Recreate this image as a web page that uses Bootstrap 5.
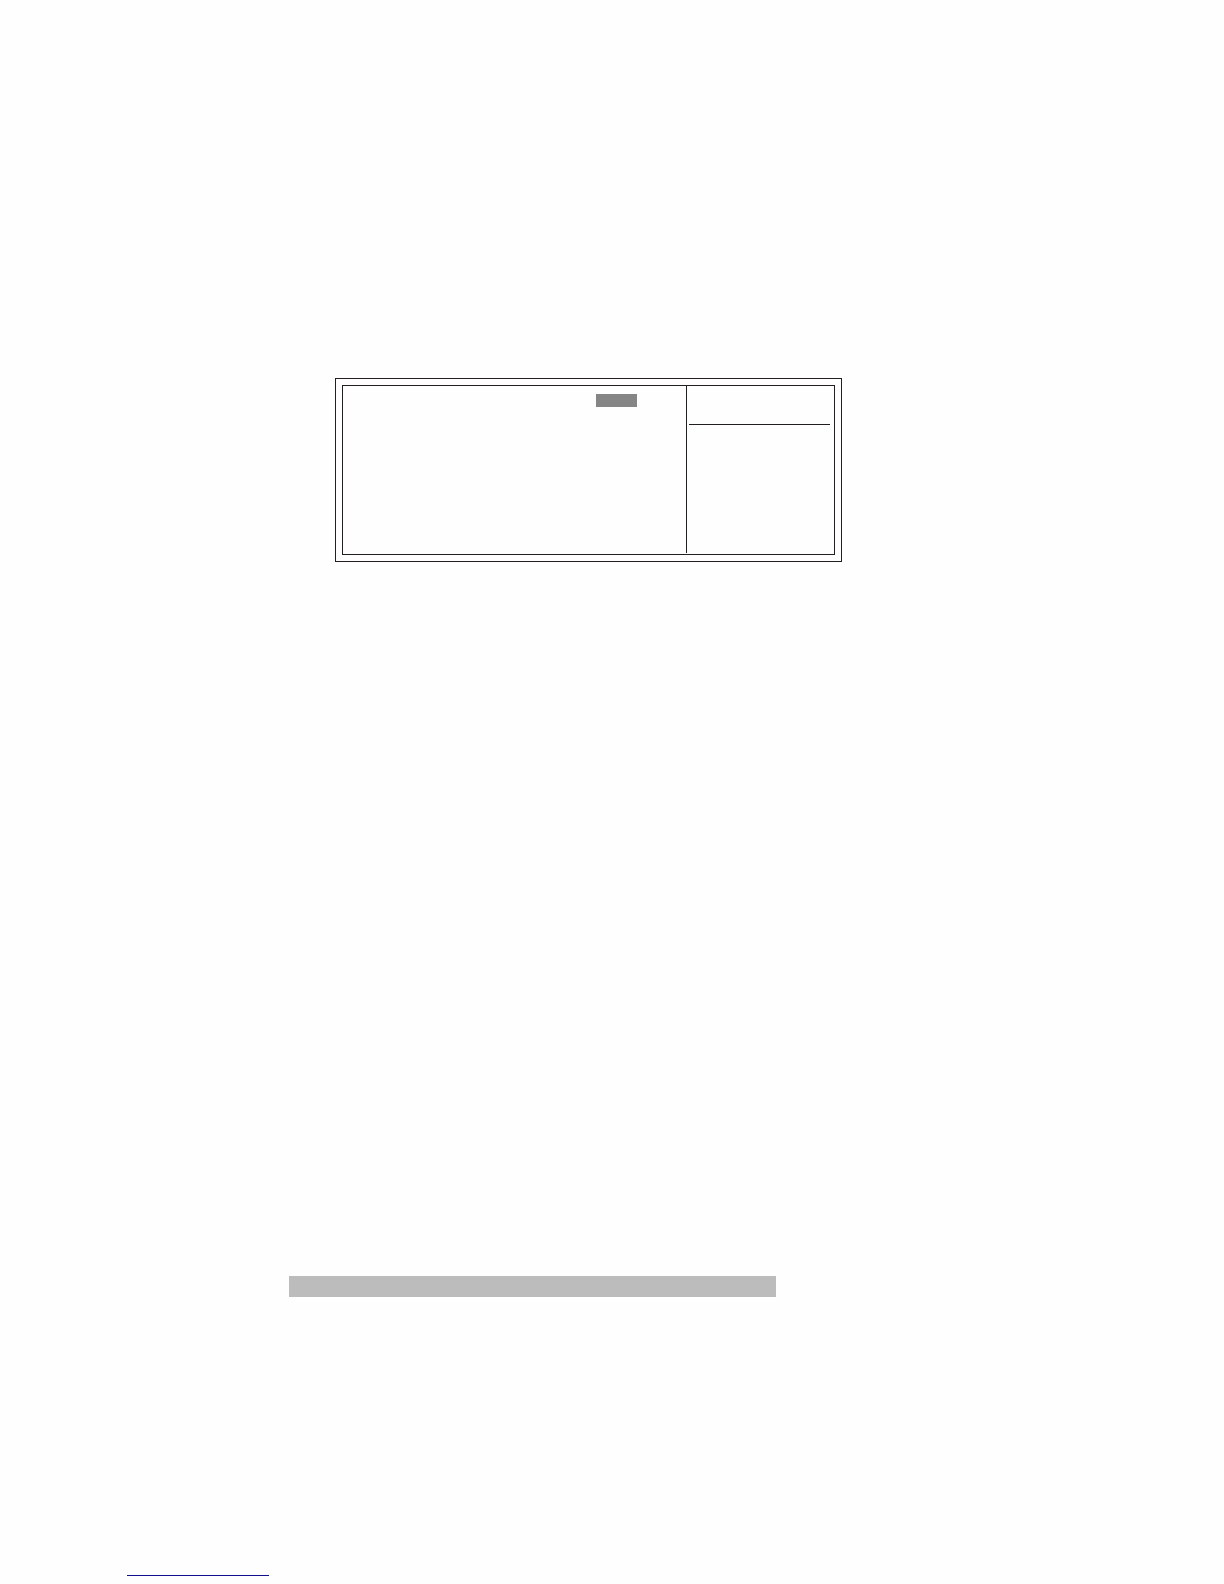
<!DOCTYPE html>
<html lang="en">
<head>
<meta charset="utf-8">
<meta name="viewport" content="width=device-width, initial-scale=1">
<title>Setup</title>
<link href="https://cdn.jsdelivr.net/npm/bootstrap@5.3.0/dist/css/bootstrap.min.css" rel="stylesheet">
<style>
  body { background: #fefefe; font-family: "Liberation Sans", Arial, sans-serif; }
  .sheet { padding: 378px 127px 8px; }
  .frame-outer { max-width: 507px; margin-left: 208px; padding: 6px; border: 1px solid #231f20; }
  .frame-inner { height: 170px; border: 1px solid #231f20; }
  .option-area { padding: 8px 49px 0 0; }
  .selected-value { width: 41px; height: 13px; background: #858585; }
  .help-area { width: 148px; margin-bottom: 1px; padding: 38px 4px 0 2px; border-left: 1px solid #231f20; }
  .rule { margin: 0; border-top: 1px solid #231f20; opacity: 1; }
  .band { max-width: 487px; height: 21px; margin: 714px 0 0 162px; background: #bcbcbc; }
  .link-rule { width: 142px; margin: 278px 0 0; border-top: 1px solid #10108c; opacity: 1; }
</style>
<script src="https://cdn.jsdelivr.net/npm/bootstrap@5.3.0/dist/js/bootstrap.bundle.min.js" defer></script>
</head>
<body>
<main class="sheet">
  <section class="frame-outer">
    <div class="frame-inner d-flex">
      <div class="option-area flex-grow-1 d-flex justify-content-end">
        <div class="selected-value"></div>
      </div>
      <div class="help-area flex-shrink-0">
        <hr class="rule">
      </div>
    </div>
  </section>
  <div class="band"></div>
  <hr class="link-rule">
</main>
</body>
</html>
